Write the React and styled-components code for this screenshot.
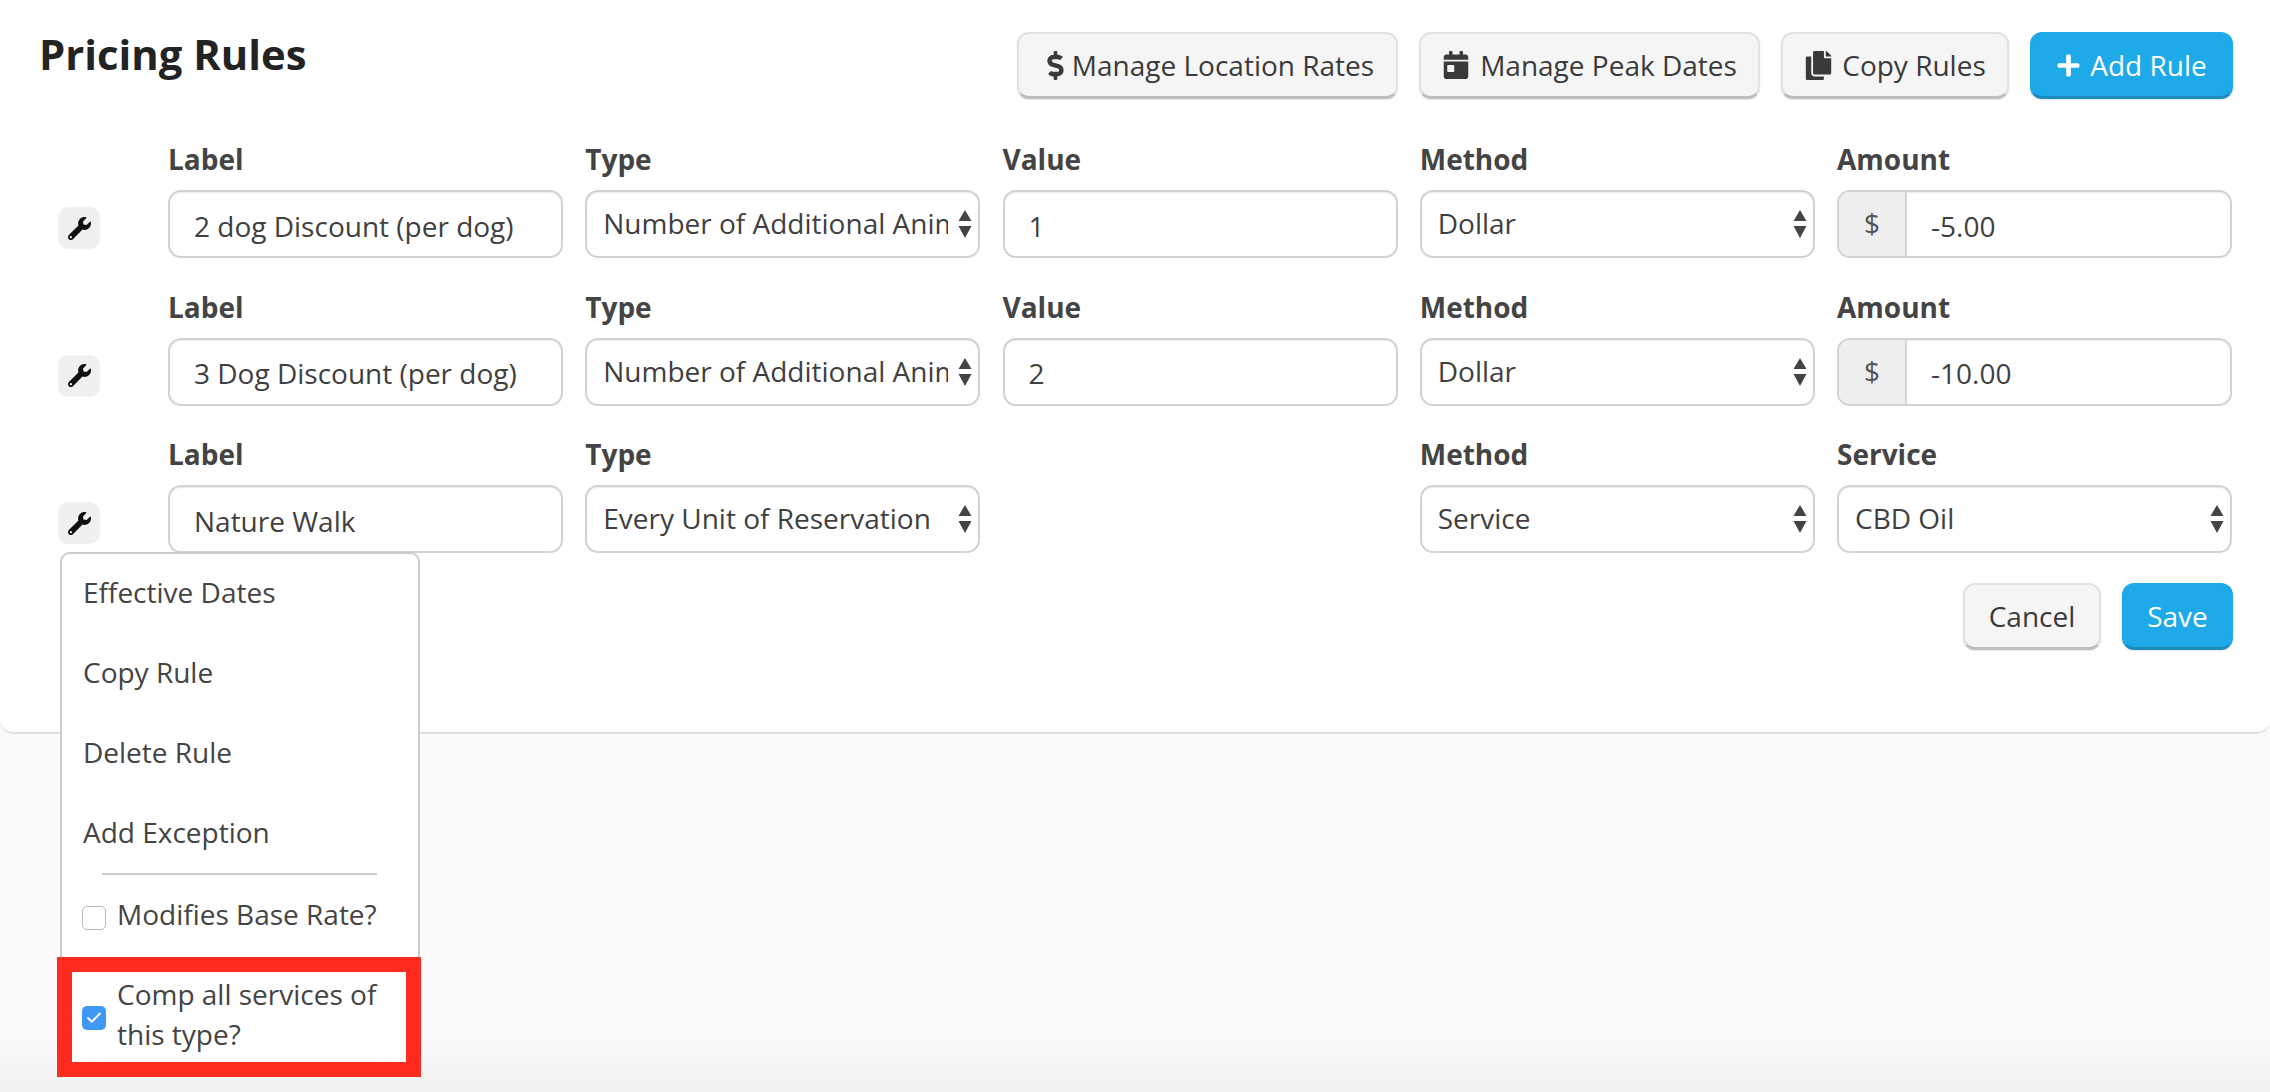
import React from 'react';
import styled, { createGlobalStyle } from 'styled-components';
import { FaWrench, FaDollarSign, FaCalendarDay, FaCopy, FaPlus } from 'react-icons/fa';
import { Check } from 'lucide-react';

const GlobalStyle = createGlobalStyle`
  html, body {
    margin: 0;
    padding: 0;
  }
  body {
    font-family: "Open Sans", "Noto Sans", sans-serif;
    color: #3f3f3f;
    overflow: hidden;
  }
  * {
    box-sizing: border-box;
  }
`;

const Page = styled.div`
  height: 1092px;
  background: linear-gradient(#fafafa 1035px, #f1f1f1 1092px);
`;

const Panel = styled.section`
  height: 734px;
  padding: 32px 37px 0 39px;
  background: #fff;
  border-bottom: 2px solid #ddd;
  border-radius: 0 0 14px 14px;
`;

const Header = styled.header`
  display: flex;
  justify-content: space-between;
  align-items: flex-start;
`;

const Title = styled.h1`
  margin: 0;
  font-size: 41.8px;
  line-height: 44px;
  font-weight: 700;
  color: #232323;
`;

const Toolbar = styled.div`
  display: flex;
  gap: 21px;
`;

const Button = styled.button`
  display: inline-flex;
  align-items: center;
  justify-content: center;
  gap: ${props => props.$gap}px;
  height: 67px;
  width: ${props => props.$width}px;
  padding: 0;
  font-family: inherit;
  font-size: 28px;
  border-radius: 12px;
  border: 2px solid ${props => (props.$primary ? '#1eaae9' : '#e2e2e2')};
  border-bottom: 3px solid ${props => (props.$primary ? '#1a8cc0' : '#bdbdbd')};
  background: ${props => (props.$primary ? '#1eaae9' : '#f5f5f5')};
  color: ${props => (props.$primary ? '#fff' : '#3a3a3a')};
  box-shadow: 0 1px 2px rgba(0, 0, 0, 0.1);
`;

const Rules = styled.div`
  margin-top: 49px;
  display: flex;
  flex-direction: column;
  gap: 37.5px;
`;

const RuleRow = styled.div`
  display: flex;
  align-items: flex-end;
  padding: 0 1px 0 19px;
`;

const ToolCell = styled.div`
  position: relative;
  flex: 0 0 110px;
  margin-bottom: 9px;
`;

const WrenchButton = styled.div`
  display: flex;
  align-items: center;
  justify-content: center;
  width: 42px;
  height: 42px;
  border-radius: 10px;
  background: #f0f0f0;
  color: #111;
`;

const Fields = styled.div`
  flex: 1;
  display: grid;
  grid-template-columns: repeat(5, 1fr);
  gap: 22.25px;
`;

const Field = styled.div`
  min-width: 0;
`;

const FieldLabel = styled.label`
  display: block;
  height: 42px;
  font-size: 28px;
  line-height: 23px;
  font-weight: 700;
  color: #444;
`;

const controlBox = `
  width: 100%;
  height: 68px;
  background: #fff;
  border: 2px solid #d2d2d2;
  border-radius: 13px;
  box-shadow: inset 0 1px 1px rgba(0, 0, 0, 0.08);
  font-family: inherit;
  font-size: 28px;
  color: #3f3f3f;
`;

const TextInput = styled.input`
  ${controlBox}
  padding: 3px 0 0 24px;
  outline: none;
`;

const SelectWrap = styled.div`
  position: relative;
`;

const Select = styled.select`
  ${controlBox}
  appearance: none;
  padding: 0 30px 2px 16px;
  outline: none;
`;

const Arrows = styled.svg`
  position: absolute;
  right: 8px;
  top: 20px;
  width: 14px;
  height: 28px;
  pointer-events: none;
`;

const InputGroup = styled.div`
  display: flex;
  height: 68px;
  border: 2px solid #d2d2d2;
  border-radius: 13px;
  overflow: hidden;
  background: #fff;
  box-shadow: inset 0 1px 1px rgba(0, 0, 0, 0.08);
`;

const Addon = styled.span`
  flex: 0 0 68px;
  display: flex;
  align-items: center;
  justify-content: center;
  padding-bottom: 2px;
  background: #eee;
  border-right: 2px solid #d2d2d2;
  font-size: 28px;
  color: #555;
`;

const GroupInput = styled.input`
  flex: 1;
  min-width: 0;
  border: 0;
  outline: none;
  padding: 3px 0 0 24px;
  background: transparent;
  font-family: inherit;
  font-size: 28px;
  color: #3f3f3f;
`;

const Actions = styled.div`
  display: flex;
  justify-content: flex-end;
  gap: 21px;
  margin-top: 30px;
`;

const Menu = styled.div`
  position: absolute;
  z-index: 2;
  top: 50px;
  left: 2px;
  width: 360px;
  height: 520px;
  background: #fff;
  border: 2px solid #ccc;
  border-radius: 10px;
`;

const MenuItem = styled.div`
  height: 80px;
  padding-left: 21px;
  font-size: 28px;
  line-height: 76px;
  color: #444;
`;

const MenuDivider = styled.hr`
  margin: -1px 41px 0 40px;
  border: 0;
  border-top: 2px solid #ccc;
`;

const CheckRow = styled.div`
  display: flex;
  align-items: center;
  gap: 11px;
  padding: 0 20px;
  min-height: ${props => props.$minHeight}px;
  margin-top: ${props => props.$top || 0}px;
  font-size: 28px;
  line-height: 40px;
  color: #444;
`;

const CheckBox = styled.span`
  flex: 0 0 24px;
  display: flex;
  align-items: center;
  justify-content: center;
  width: 24px;
  height: 24px;
  margin-top: 8px;
  border-radius: 5px;
  border: ${props => (props.$checked ? '0' : '1.5px solid #bbb')};
  background: ${props => (props.$checked ? '#3f97f6' : '#fff')};
  color: #fff;
`;

const Callout = styled.div`
  position: absolute;
  top: 403px;
  left: -5px;
  width: 364px;
  height: 120px;
  border: 15px solid #fe2b1f;
  pointer-events: none;
`;

const rules = [
  {
    label: '2 dog Discount (per dog)',
    type: 'Number of Additional Animals',
    value: '1',
    method: 'Dollar',
    amount: '-5.00',
  },
  {
    label: '3 Dog Discount (per dog)',
    type: 'Number of Additional Animals',
    value: '2',
    method: 'Dollar',
    amount: '-10.00',
  },
  {
    label: 'Nature Walk',
    type: 'Every Unit of Reservation',
    method: 'Service',
    service: 'CBD Oil',
    open: true,
  },
];

function SelectBox({ value }) {
  return (
    <SelectWrap>
      <Select defaultValue={value}>
        <option>{value}</option>
      </Select>
      <Arrows viewBox="0 0 14 28">
        <path d="M7 0 L13.5 11 H0.5 Z M7 28 L13.5 16 H0.5 Z" fill="#444" />
      </Arrows>
    </SelectWrap>
  );
}

function RuleMenu() {
  return (
    <Menu>
      <MenuItem>Effective Dates</MenuItem>
      <MenuItem>Copy Rule</MenuItem>
      <MenuItem>Delete Rule</MenuItem>
      <MenuItem>Add Exception</MenuItem>
      <MenuDivider />
      <CheckRow $minHeight={78}>
        <CheckBox />
        Modifies Base Rate?
      </CheckRow>
      <CheckRow $minHeight={80} $top={21}>
        <CheckBox $checked>
          <Check size={18} strokeWidth={2.5} />
        </CheckBox>
        <span>Comp all services of this type?</span>
      </CheckRow>
      <Callout />
    </Menu>
  );
}

function Rule({ rule }) {
  return (
    <RuleRow>
      <ToolCell>
        <WrenchButton>
          <FaWrench size={23} />
        </WrenchButton>
        {rule.open && <RuleMenu />}
      </ToolCell>
      <Fields>
        <Field>
          <FieldLabel>Label</FieldLabel>
          <TextInput defaultValue={rule.label} />
        </Field>
        <Field>
          <FieldLabel>Type</FieldLabel>
          <SelectBox value={rule.type} />
        </Field>
        <Field>
          {rule.value && (
            <>
              <FieldLabel>Value</FieldLabel>
              <TextInput defaultValue={rule.value} />
            </>
          )}
        </Field>
        <Field>
          <FieldLabel>Method</FieldLabel>
          <SelectBox value={rule.method} />
        </Field>
        <Field>
          {rule.service ? (
            <>
              <FieldLabel>Service</FieldLabel>
              <SelectBox value={rule.service} />
            </>
          ) : (
            <>
              <FieldLabel>Amount</FieldLabel>
              <InputGroup>
                <Addon>$</Addon>
                <GroupInput defaultValue={rule.amount} />
              </InputGroup>
            </>
          )}
        </Field>
      </Fields>
    </RuleRow>
  );
}

export default function App() {
  return (
    <Page>
      <GlobalStyle />
      <Panel>
        <Header>
          <Title>Pricing Rules</Title>
          <Toolbar>
            <Button $width={381} $gap={2}>
              <FaDollarSign size={29} />
              Manage Location Rates
            </Button>
            <Button $width={341} $gap={10}>
              <FaCalendarDay size={28} />
              Manage Peak Dates
            </Button>
            <Button $width={228} $gap={9}>
              <FaCopy size={29} />
              Copy Rules
            </Button>
            <Button $width={203} $gap={9} $primary>
              <FaPlus size={25} />
              Add Rule
            </Button>
          </Toolbar>
        </Header>
        <Rules>
          {rules.map(rule => (
            <Rule key={rule.label} rule={rule} />
          ))}
        </Rules>
        <Actions>
          <Button $width={138}>Cancel</Button>
          <Button $width={111} $primary>Save</Button>
        </Actions>
      </Panel>
    </Page>
  );
}
